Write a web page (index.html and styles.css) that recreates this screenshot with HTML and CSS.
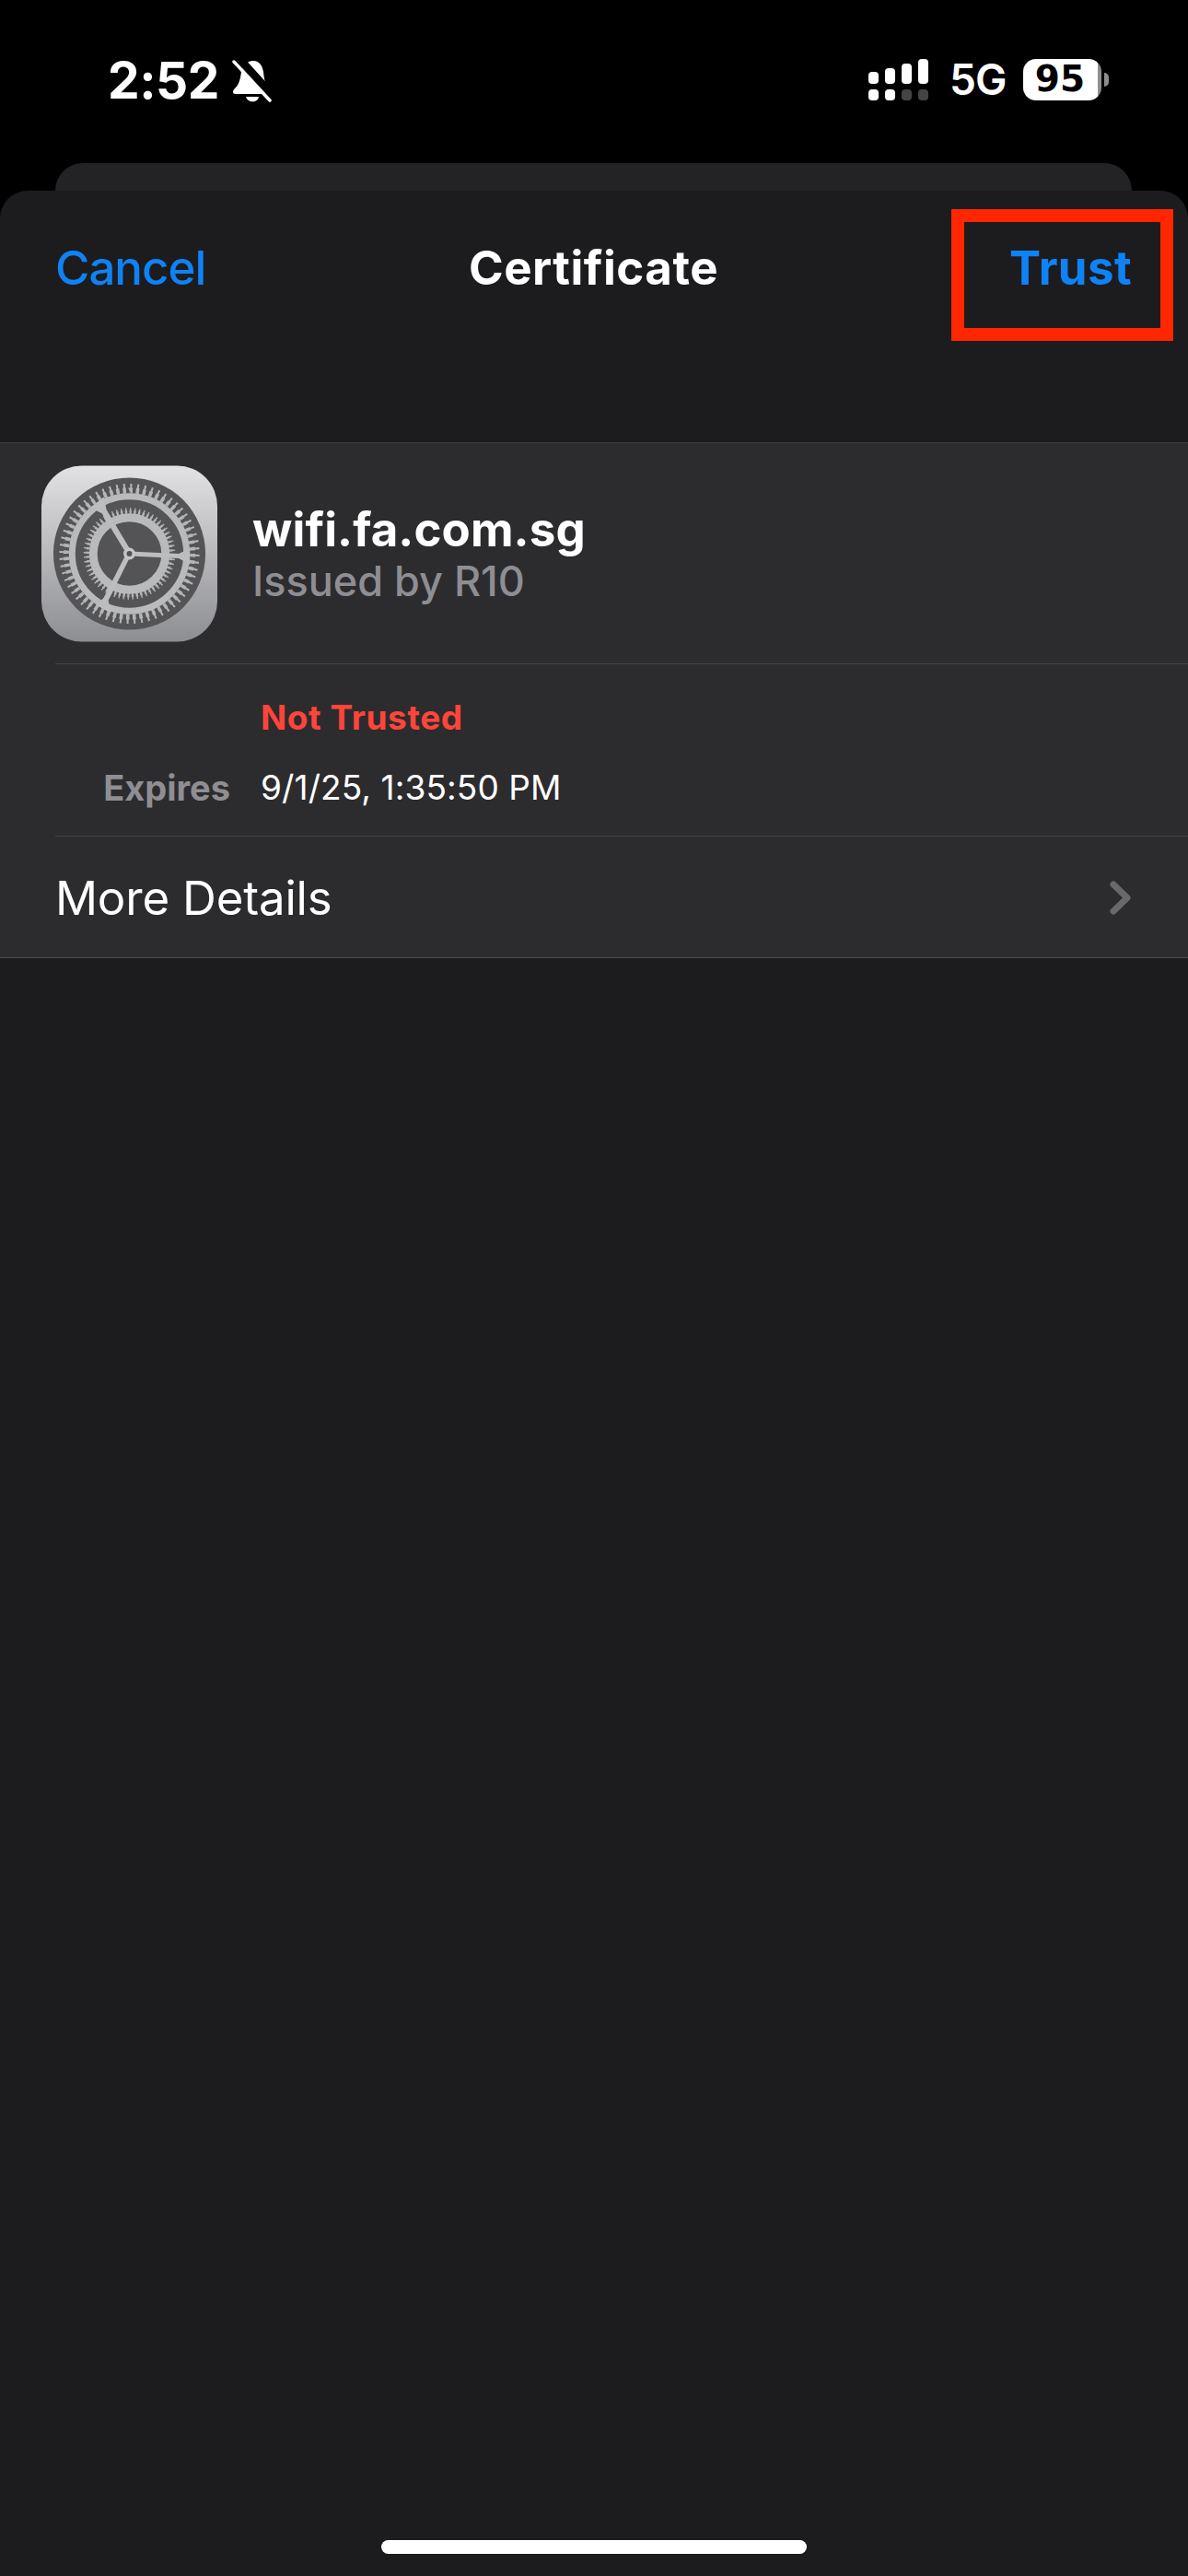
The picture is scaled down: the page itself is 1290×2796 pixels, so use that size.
FILE: index.html
```html
<!DOCTYPE html>
<html lang="en">
<head>
  <meta charset="UTF-8" />
  <meta name="viewport" content="width=device-width, initial-scale=1.0"/>
  <title>Certificate</title>
  <link rel="stylesheet" href="styles.css">
</head>
<body>
  <!-- Status Bar -->
  <div class="status-bar">
    <div class="status-left">
      <span class="time">2:52</span>
      <svg class="bell" width="43" height="46" viewBox="0 0 43 46">
        <path fill="#fff" d="M23 1C30 1 33 7 34 13C35 22 36 28 42 33C43 36 42 37 40 37L4 37C1 37 0 35 2 32C8 27 9 20 10 13C11 6 16 1 23 1Z"/>
        <path fill="#fff" d="M15 40H29C28 47 17 47 15 40Z"/>
        <path stroke="#000" stroke-width="9" d="M6 -3L47 42"/>
        <path stroke="#fff" stroke-width="3.5" stroke-linecap="round" d="M2 2L41 44"/>
      </svg>
    </div>
    <div class="status-right">
      <svg class="signal" width="65" height="45" viewBox="0 0 65 45">
        <rect x="0" y="14" width="11" height="13" rx="4" fill="#fff"/>
        <rect x="18" y="10" width="11" height="17" rx="4" fill="#fff"/>
        <rect x="36" y="5" width="11" height="22" rx="4" fill="#fff"/>
        <rect x="54" y="0" width="11" height="27" rx="4" fill="#fff"/>
        <rect x="0" y="33" width="11" height="12" rx="4" fill="#fff"/>
        <rect x="18" y="33" width="11" height="12" rx="4" fill="#fff"/>
        <rect x="36" y="33" width="11" height="12" rx="4" fill="#444"/>
        <rect x="54" y="33" width="11" height="12" rx="4" fill="#444"/>
      </svg>
      <span class="network">5G</span>
      <div class="battery"><span class="battery-level">95</span></div>
      <div class="battery-cap"></div>
    </div>
  </div>

  <div class="back-card"></div>

  <div class="sheet">
    <div class="nav">
      <span class="nav-cancel">Cancel</span>
      <span class="nav-title">Certificate</span>
      <span class="nav-trust">Trust</span>
    </div>
    <div class="highlight"></div>

    <div class="section">
      <div class="cert-row">
        <svg class="cert-icon" width="191" height="192" viewBox="0 0 192 192">
          <defs>
            <linearGradient id="iconBg" x1="0" y1="0" x2="0" y2="1">
              <stop offset="0" stop-color="#e2e2e4"/>
              <stop offset="1" stop-color="#8d8e92"/>
            </linearGradient>
          </defs>
          <rect width="192" height="192" rx="44" fill="url(#iconBg)"/>
          <circle cx="96" cy="96" r="83" fill="#545456"/>
          <!-- outer wheel, teeth narrow towards the tip -->
          <circle cx="96" cy="96" r="74" fill="none" stroke="#b4b5b7" stroke-width="5" pathLength="360" stroke-dasharray="1.6 4.4" stroke-dashoffset="-0.7"/>
          <circle cx="96" cy="96" r="69" fill="none" stroke="#b4b5b7" stroke-width="6" pathLength="360" stroke-dasharray="3 3"/>
          <circle cx="96" cy="96" r="62.5" fill="none" stroke="#b9babc" stroke-width="7"/>
          <!-- inner wheel -->
          <circle cx="96" cy="96" r="48.5" fill="none" stroke="#b4b5b7" stroke-width="3" pathLength="360" stroke-dasharray="1.6 4.4" stroke-dashoffset="-0.7"/>
          <circle cx="96" cy="96" r="45.5" fill="none" stroke="#b4b5b7" stroke-width="4" pathLength="360" stroke-dasharray="3 3"/>
          <circle cx="96" cy="96" r="39.5" fill="none" stroke="#b9babc" stroke-width="9"/>
          <!-- spokes -->
          <path fill="#bcbdbf" d="M96 93.5L150 96L162 90V108L150 101L96 98.5Z"/>
          <path fill="#bcbdbf" d="M93.5 94L98 97L73 147L76 161L60 152L68 144Z"/>
          <path fill="#bcbdbf" d="M98.5 94L94 98L66 52L54 46L68 34L71 48Z"/>
          <circle cx="96" cy="96" r="6.5" fill="#c4c5c7"/>
          <circle cx="96" cy="96" r="3" fill="#545456"/>
        </svg>
        <div class="cert-text">
          <div class="cert-name">wifi.fa.com.sg</div>
          <div class="cert-issuer">Issued by R10</div>
        </div>
      </div>
      <div class="info">
        <div class="info-grid">
          <span></span>
          <span class="status-bad">Not Trusted</span>
          <span class="info-label">Expires</span>
          <span class="info-value">9/1/25, 1:35:50 PM</span>
        </div>
      </div>
      <div class="more-row">
        <span>More Details</span>
        <svg width="23" height="37" viewBox="0 0 23 37">
          <path fill="none" stroke="#69696d" stroke-width="7" stroke-linecap="round" stroke-linejoin="round" d="M4 4L19 18.5L4 33"/>
        </svg>
      </div>
    </div>

    <div class="spacer"></div>
    <div class="home-bar"></div>
  </div>
</body>
</html>
```

FILE: styles.css
```css
* {
  box-sizing: border-box;
}

body {
  margin: 0;
  width: 1290px;
  height: 2796px;
  overflow: hidden;
  background-color: #000000;
  color: #ffffff;
  font-family: Inter, "Liberation Sans", sans-serif;
  display: flex;
  flex-direction: column;
}

/* Status Bar */
.status-bar {
  height: 177px;
  display: flex;
  justify-content: space-between;
  align-items: flex-start;
  padding: 64px 86px 0 117px;
}

.status-left {
  display: flex;
  align-items: center;
  gap: 14px;
  height: 47px;
}

.time {
  font-size: 55px;
  font-weight: 700;
  line-height: 47px;
  letter-spacing: -0.5px;
}

.status-right {
  display: flex;
  align-items: center;
  height: 45px;
}

.network {
  font-size: 46px;
  font-weight: 600;
  line-height: 45px;
  margin-left: 23px;
  width: 57px;
  letter-spacing: -1px;
}

.battery {
  width: 85px;
  height: 45px;
  margin-left: 23px;
  border-radius: 14px;
  background: linear-gradient(to right, #ffffff 95%, #8e8e90 95%);
  color: #000000;
  font-family: "DejaVu Sans", sans-serif;
  display: flex;
  justify-content: center;
  padding-right: 5px;
}

.battery-level {
  font-size: 39px;
  font-weight: 700;
  line-height: 43px;
}

.battery-cap {
  width: 5px;
  height: 15px;
  margin-left: 3px;
  background-color: #8e8e90;
  border-radius: 0 8px 8px 0;
}

/* Sheets */
.back-card {
  height: 30px;
  margin: 0 61px 0 60px;
  background-color: #232325;
  border-radius: 30px 30px 0 0;
  flex-shrink: 0;
}

.sheet {
  position: relative;
  flex: 1;
  display: flex;
  flex-direction: column;
  background-color: #1c1c1e;
  border-radius: 30px 30px 0 0;
}

.nav {
  height: 273px;
  padding: 0 61px 0 60px;
  display: grid;
  grid-template-columns: 1fr auto 1fr;
  font-size: 51px;
  line-height: 168px;
}

.nav-cancel {
  color: #0f82f5;
  font-weight: 500;
  letter-spacing: -1px;
}

.nav-title {
  font-weight: 700;
  letter-spacing: 0.5px;
}

.nav-trust {
  color: #0f82f5;
  font-weight: 700;
  letter-spacing: 0.4px;
  text-align: right;
}

.highlight {
  position: absolute;
  top: 20px;
  right: 16px;
  width: 241px;
  height: 143px;
  border: 14px solid #ff2600;
}

/* Certificate Section */
.section {
  background-color: #2c2c2e;
  border-top: 1px solid #3d3d40;
  border-bottom: 1px solid #4a4a4d;
}

.cert-row {
  height: 239px;
  padding-left: 45px;
  display: flex;
  align-items: flex-start;
  gap: 38px;
}

.cert-icon {
  margin-top: 24px;
}

.cert-text {
  padding-top: 64px;
}

.cert-name {
  font-size: 51px;
  font-weight: 700;
  line-height: 60px;
  letter-spacing: 0.1px;
}

.cert-issuer {
  font-size: 45px;
  font-weight: 500;
  line-height: 52px;
  color: #8e8e93;
}

.info {
  margin-left: 60px;
  height: 187px;
  border-top: 1px solid #45454a;
  padding: 33px 0 0 0;
}

.info-grid {
  display: grid;
  grid-template-columns: 190px auto;
  column-gap: 33px;
  row-gap: 26px;
  font-size: 37px;
  line-height: 50px;
}

.status-bad {
  color: #ff453a;
  font-weight: 700;
  letter-spacing: 0.6px;
}

.info-label {
  color: #8e8e93;
  font-weight: 700;
  font-size: 38px;
  text-align: right;
}

.info-value {
  letter-spacing: 0.1px;
}

.more-row {
  margin-left: 60px;
  height: 132px;
  border-top: 1px solid #45454a;
  padding: 2px 62px 0 0;
  display: flex;
  justify-content: space-between;
  align-items: center;
  font-size: 51px;
  letter-spacing: -0.2px;
}

.spacer {
  flex: 1;
}

.home-bar {
  width: 462px;
  height: 15px;
  margin: 0 auto 24px auto;
  background-color: #ffffff;
  border-radius: 8px;
}
```
